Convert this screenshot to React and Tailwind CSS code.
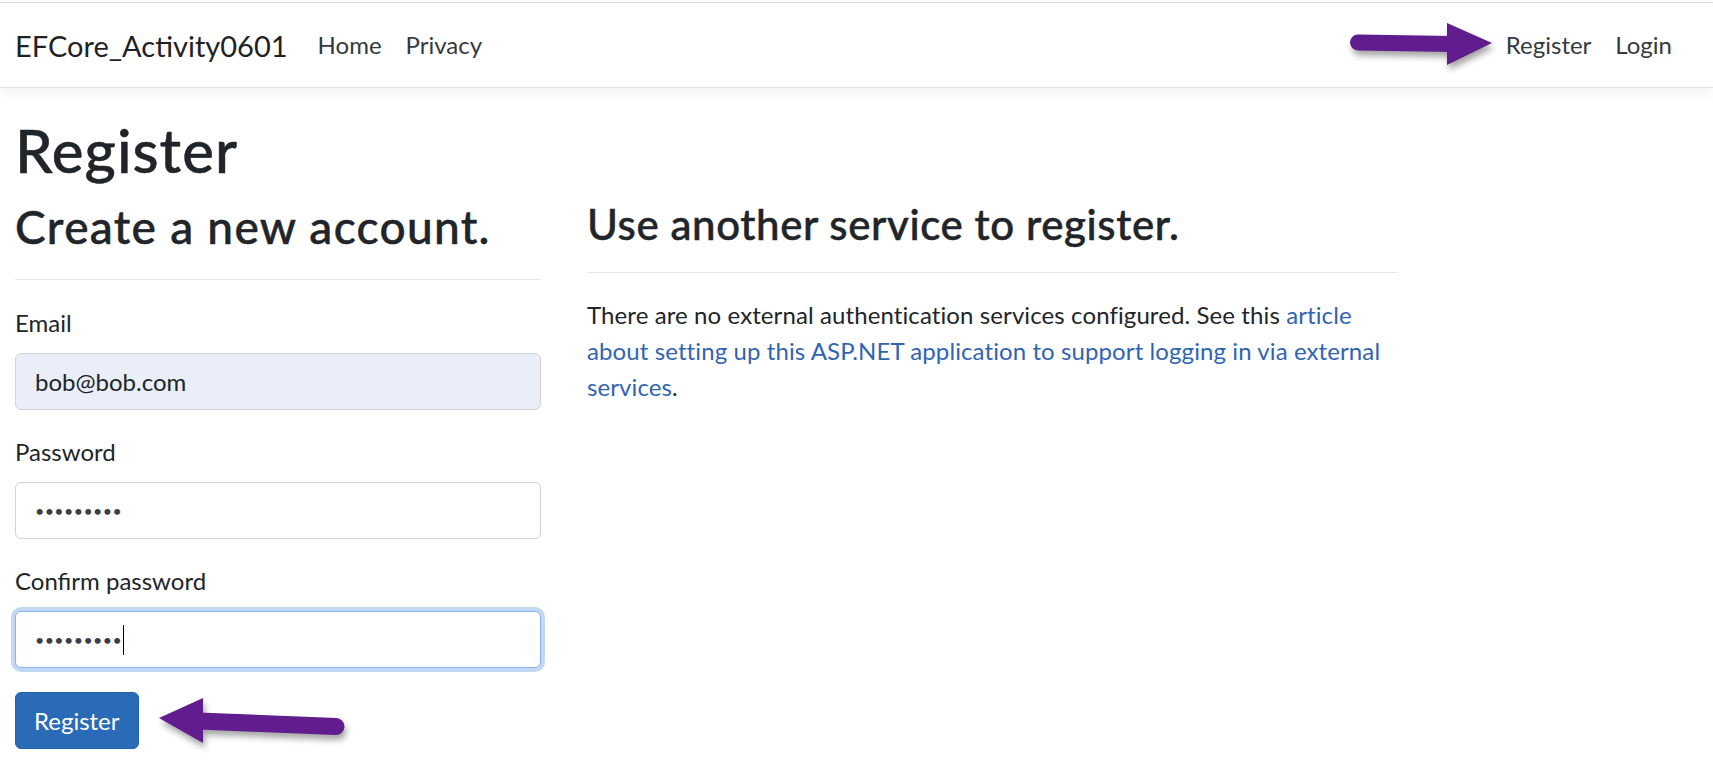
import React from 'react';

const FONT = 'font-["Lato","Noto_Sans",sans-serif]';
const HEAVY = '[-webkit-text-stroke:0.5px_#212529]';

const NavLink = ({ children }) => (
  <a href="#" className="px-[12px] text-[24px] leading-[36px] text-[#343a40]">
    {children}
  </a>
);

const Field = ({ label, children }) => (
  <div className="mb-[24px]">
    <label className="block text-[24px] leading-[36px] text-[#212529]">{label}</label>
    <div className="mt-[12px]">{children}</div>
  </div>
);

const Dots = ({ caret }) => (
  <span className="flex items-center">
    <span className="text-[16px] leading-none tracking-[0.4px] text-[#3b3f45]">•••••••••</span>
    {caret ? <span className="ml-[1px] inline-block h-[30px] w-px bg-black" /> : null}
  </span>
);

const ArrowRight = () => (
  <svg
    width="170"
    height="66"
    viewBox="0 0 170 66"
    className="pointer-events-none absolute left-[1340px] top-[14px] drop-shadow-[2px_5px_3px_rgba(0,0,0,0.35)]"
    aria-hidden
  >
    <line x1="18" y1="28.5" x2="112" y2="30" stroke="#611c8d" strokeWidth="16" strokeLinecap="round" />
    <polygon points="107,9 152,29 107,51" fill="#611c8d" />
  </svg>
);

const ArrowLeft = () => (
  <svg
    width="210"
    height="66"
    viewBox="0 0 210 66"
    className="pointer-events-none absolute left-[150px] top-[690px] drop-shadow-[2px_5px_3px_rgba(0,0,0,0.35)]"
    aria-hidden
  >
    <line x1="48" y1="31" x2="186" y2="36.5" stroke="#611c8d" strokeWidth="17" strokeLinecap="round" />
    <polygon points="9,28 53,8 53,53" fill="#611c8d" />
  </svg>
);

export default function App() {
  return (
    <div className={`relative min-h-[770px] bg-white pt-[2px] text-[#212529] ${FONT}`}>
      <header className="flex h-[86px] items-center justify-between border-y border-t-[#dcdcdc] border-b-[#e3e3e3] bg-white pl-[15px] pr-[29px] shadow-[0_6px_12px_rgba(0,0,0,0.05)]">
        <div className="flex items-center">
          <a href="#" className="mr-[18px] text-[29px] leading-[45px] text-[#1f2225]">
            EFCore_Activity0601
          </a>
          <NavLink>Home</NavLink>
          <NavLink>Privacy</NavLink>
        </div>
        <div className="flex items-center">
          <NavLink>Register</NavLink>
          <NavLink>Login</NavLink>
        </div>
      </header>

      <main className="px-[15px] pt-[27px]">
        <h1 className={`mb-[14px] text-[60px] font-medium leading-[1.17] tracking-[1px] ${HEAVY}`}>Register</h1>
        <div className="flex gap-[46px]">
          <section className="w-[526px]">
            <h2 className={`text-[46px] font-medium leading-[1.2] tracking-[1.3px] ${HEAVY}`}>Create a new account.</h2>
            <hr className="mb-[25px] mt-[25px] border-t border-[#e6e6e6]" />
            <Field label="Email">
              <div className="flex h-[57px] items-center rounded-[6px] border border-[#ced4da] bg-[#e9eef8] px-[19px] text-[24px] text-[#212529]">
                bob@bob.com
              </div>
            </Field>
            <Field label="Password">
              <div className="flex h-[57px] items-center rounded-[6px] border border-[#ced4da] bg-white px-[19px]">
                <Dots />
              </div>
            </Field>
            <Field label="Confirm password">
              <div className="flex h-[57px] items-center rounded-[6px] border border-[#86b3ee] bg-white px-[19px] shadow-[0_0_0_4px_#c3d8f4]">
                <Dots caret />
              </div>
            </Field>
            <button
              type="button"
              className="h-[57px] rounded-[6px] border border-[#1f62ad] bg-[#2a6bb8] px-[18px] text-[24px] leading-[36px] text-white"
            >
              Register
            </button>
          </section>

          <section className="w-[811px]">
            <h3 className={`text-[42px] font-medium leading-[1.2] tracking-[0.6px] ${HEAVY}`}>Use another service to register.</h3>
            <hr className="mb-[24px] mt-[22px] border-t border-[#e6e6e6]" />
            <p className="text-[24px] leading-[36px] tracking-[0.1px]">
              There are no external authentication services configured. See this{' '}
              <a href="#" className="text-[#3064b3]">
                article about setting up this ASP.NET application to support logging in via external services
              </a>
              .
            </p>
          </section>
        </div>
      </main>

      <ArrowRight />
      <ArrowLeft />
    </div>
  );
}
